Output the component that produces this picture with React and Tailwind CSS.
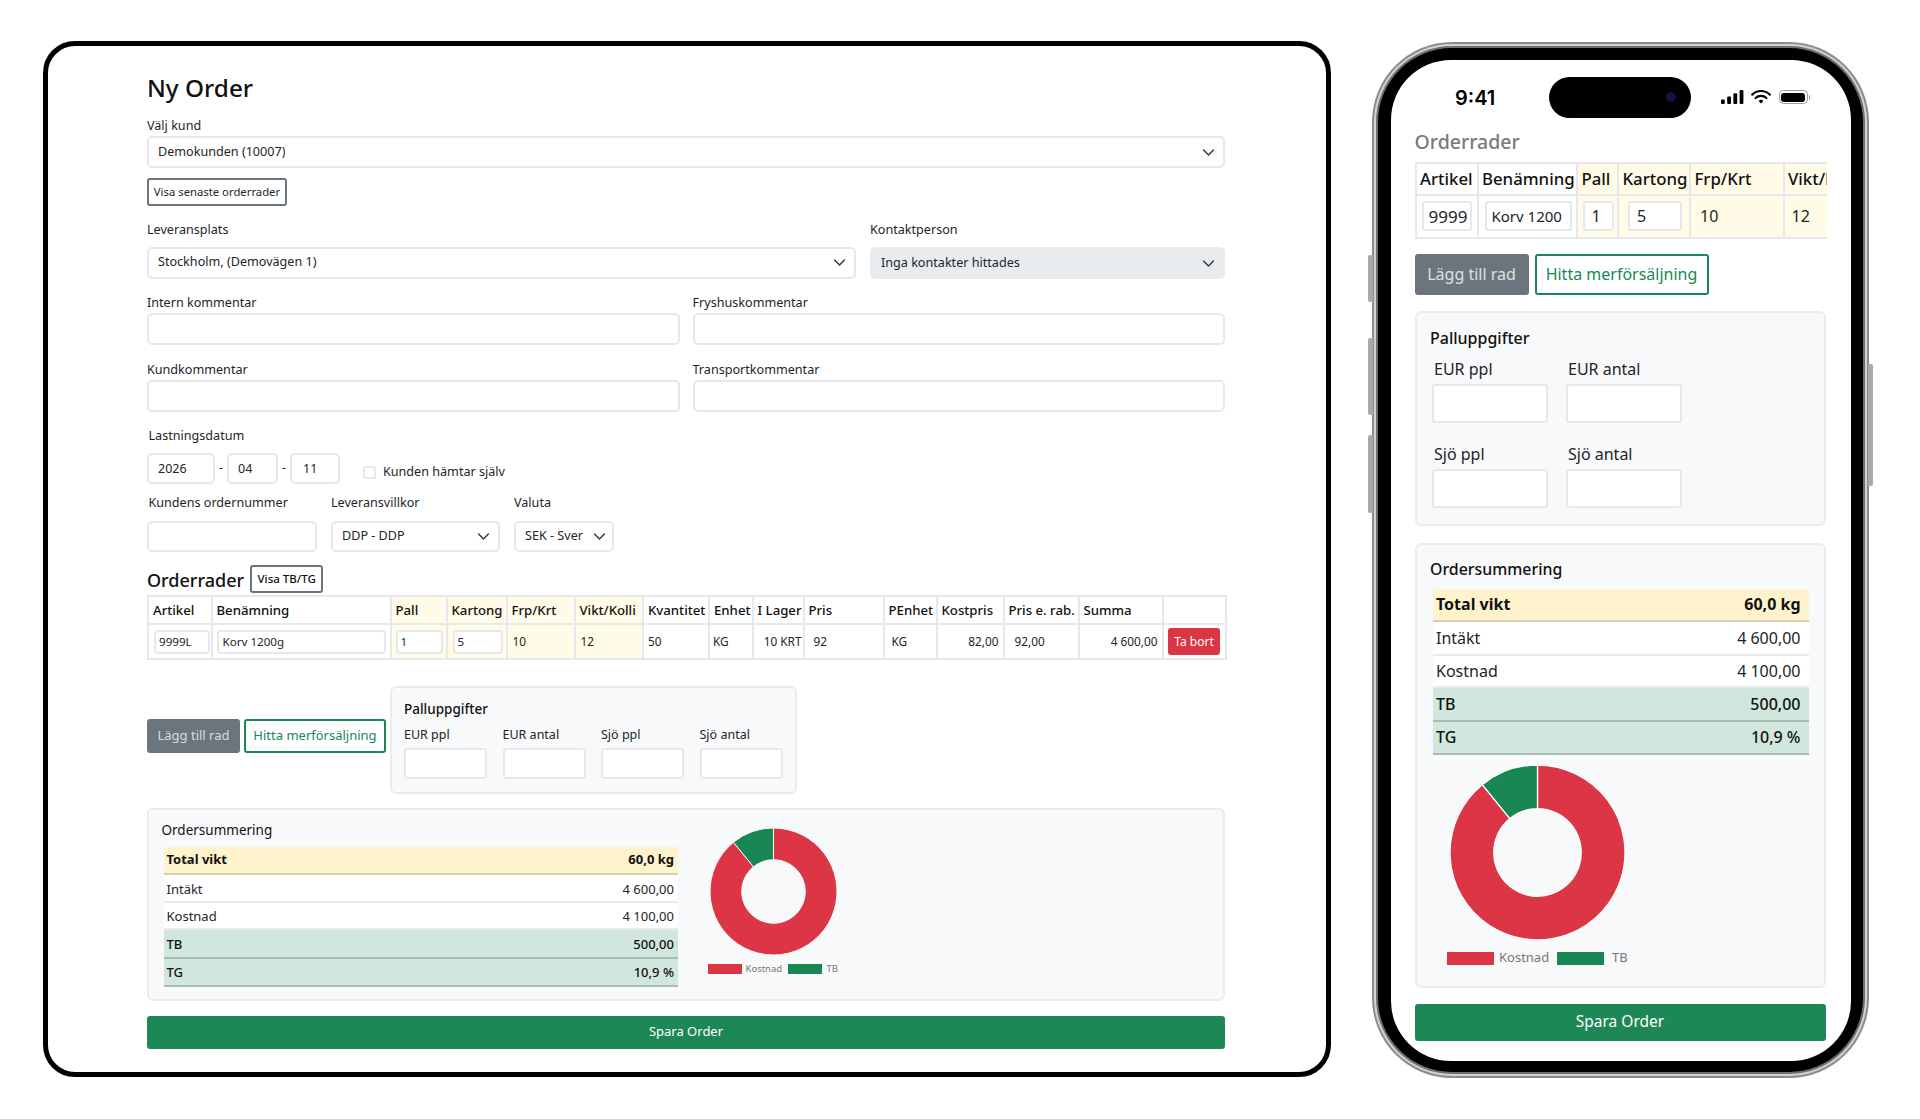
const inputBase = 'block bg-white border-2 border-[#e6e8ec] outline-none text-[#212529]';
const labelText = 'h-4 leading-[18px] text-[12.6px] whitespace-nowrap';

function Chevron({ className }) {
  return (
    <svg viewBox="0 0 16 16" fill="none" className={className}>
      <path d="m2 5 6 6 6-6" stroke="#343a40" strokeWidth="1.8" strokeLinecap="round" strokeLinejoin="round" />
    </svg>
  );
}

function Select({ value, className }) {
  return (
    <div className={`flex items-center justify-between border-2 border-[#e6e8ec] rounded-[5px] text-[12.6px] pl-[9px] pr-[8px] ${className}`}>
      <span className="whitespace-nowrap overflow-hidden">{value}</span>
      <Chevron className="w-[13px] h-[13px] shrink-0 ml-1" />
    </div>
  );
}

function Field({ label, className }) {
  return (
    <div className={className}>
      <div className={labelText}>{label}</div>
      <input readOnly className={`${inputBase} mt-[3px] w-full h-[32px] rounded-[5px]`} />
    </div>
  );
}

// share of TB in the donut: 500 of 4 600
function Donut({ className }) {
  return (
    <svg viewBox="0 0 200 200" className={className}>
      <path d="M100 0A100 100 0 1 1 36.89 22.43L68.44 61.22A50 50 0 1 0 100 50Z" fill="#dc3545" stroke="#fff" strokeWidth="1.5" />
      <path d="M36.89 22.43A100 100 0 0 1 100 0L100 50A50 50 0 0 0 68.44 61.22Z" fill="#198754" stroke="#fff" strokeWidth="1.5" />
    </svg>
  );
}

const desktopCols = [
  { label: 'Artikel', col: 'w-[63.5px]' },
  { label: 'Benämning', col: 'w-[179px]' },
  { label: 'Pall', col: 'w-[56px]', yellow: true },
  { label: 'Kartong', col: 'w-[60px]', yellow: true },
  { label: 'Frp/Krt', col: 'w-[68px]', yellow: true },
  { label: 'Vikt/Kolli', col: 'w-[68.5px]', yellow: true },
  { label: 'Kvantitet', col: 'w-[66px]' },
  { label: 'Enhet', col: 'w-[43.5px]' },
  { label: 'I Lager', col: 'w-[51px]' },
  { label: 'Pris', col: 'w-[80px]' },
  { label: 'PEnhet', col: 'w-[53px]' },
  { label: 'Kostpris', col: 'w-[67px]' },
  { label: 'Pris e. rab.', col: 'w-[75px]' },
  { label: 'Summa', col: 'w-[84px]' },
  { label: '', col: 'w-[63.5px]' },
];

const tdDesk = 'border-2 border-[#e6e8ec] text-[11.8px] p-0 whitespace-nowrap';
const cellInput = `${inputBase} h-[24px] rounded-[4px] text-[11.6px]`;

function DesktopTable() {
  return (
    <table className="mt-[2px] w-[1078px] table-fixed border-collapse">
      <colgroup>
        {desktopCols.map((c) => (
          <col key={c.label} className={c.col} />
        ))}
      </colgroup>
      <thead>
        <tr className="h-[28px]">
          {desktopCols.map((c) => (
            <th
              key={c.label}
              className={`border-2 border-[#e6e8ec] px-1 pt-[1px] text-left text-[13.2px] font-medium whitespace-nowrap text-[#111] ${c.yellow ? 'bg-[#fffbe6]' : ''}`}
            >
              {c.label}
            </th>
          ))}
        </tr>
      </thead>
      <tbody>
        <tr className="h-[35px]">
          <td className={tdDesk}>
            <input readOnly value="9999L" className={`${cellInput} w-[56px] ml-[5px] pl-[3px]`} />
          </td>
          <td className={tdDesk}>
            <input readOnly value="Korv 1200g" className={`${cellInput} w-[169px] ml-[4px] pl-[4px]`} />
          </td>
          <td className={`${tdDesk} bg-[#fffbe6]`}>
            <input readOnly value="1" className={`${cellInput} w-[47px] ml-[4px] pl-[3px]`} />
          </td>
          <td className={`${tdDesk} bg-[#fffbe6]`}>
            <input readOnly value="5" className={`${cellInput} w-[50px] ml-[5px] pl-[3px]`} />
          </td>
          <td className={`${tdDesk} bg-[#fffbe6] pl-[5px]`}>10</td>
          <td className={`${tdDesk} bg-[#fffbe6] pl-[5px]`}>12</td>
          <td className={`${tdDesk} pl-[4px]`}>50</td>
          <td className={`${tdDesk} pl-[3px]`}>KG</td>
          <td className={`${tdDesk} pr-[1px] text-right`}>10 KRT</td>
          <td className={`${tdDesk} pl-[9px]`}>92</td>
          <td className={`${tdDesk} pl-[7px]`}>KG</td>
          <td className={`${tdDesk} pr-[4px] text-right`}>82,00</td>
          <td className={`${tdDesk} pl-[10px]`}>92,00</td>
          <td className={`${tdDesk} pr-[4px] text-right`}>4 600,00</td>
          <td className={tdDesk}>
            <button className="block ml-[4.5px] w-[52px] h-[27px] rounded-[3px] bg-[#dc3545] text-white text-[12px]">Ta bort</button>
          </td>
        </tr>
      </tbody>
    </table>
  );
}

const deskRow = 'flex items-center justify-between pl-[3px] pr-[3.5px] text-[13px] border-b-2';

function Laptop() {
  return (
    <div className="w-[1288px] h-[1036px] shrink-0 border-[5px] border-black rounded-[32px] bg-white pl-[99px] pt-[26px] text-[#212529]">
      <div className="w-[1078px]">
        <h1 className="h-8 leading-8 text-[24.3px] font-medium text-[#111]">Ny Order</h1>

        <div className={`mt-[13px] ${labelText}`}>Välj kund</div>
        <Select value="Demokunden (10007)" className="mt-[3px] h-[32px]" />
        <button className="block mt-[10px] w-[140px] h-[28px] border-2 border-[#6c757d] rounded-[3px] text-[11.3px] text-[#212529] whitespace-nowrap">
          Visa senaste orderrader
        </button>

        <div className="mt-[15px] flex gap-[14.5px]">
          <div className="w-[708.5px]">
            <div className={labelText}>Leveransplats</div>
            <Select value="Stockholm, (Demovägen 1)" className="mt-[10px] h-[32px] pb-[2px]" />
          </div>
          <div className="w-[355px]">
            <div className={labelText}>Kontaktperson</div>
            <Select value="Inga kontakter hittades" className="mt-[10px] h-[32px] pt-[1px] bg-[#e9ecef] border-[#e9ecef]" />
          </div>
        </div>

        <div className="mt-[15px] flex gap-[13px]">
          <Field label="Intern kommentar" className="w-[532.5px]" />
          <Field label="Fryshuskommentar" className="w-[532.5px]" />
        </div>
        <div className="mt-[16px] flex gap-[13px]">
          <Field label="Kundkommentar" className="w-[532.5px]" />
          <Field label="Transportkommentar" className="w-[532.5px]" />
        </div>

        <div className={`mt-[15px] ml-[1.5px] ${labelText}`}>Lastningsdatum</div>
        <div className="mt-[10px] flex items-center text-[12.5px]">
          <input readOnly value="2026" className={`${inputBase} w-[68px] h-[31px] rounded-[5px] pl-[9px]`} />
          <span className="w-[12px] text-center">-</span>
          <input readOnly value="04" className={`${inputBase} w-[51px] h-[31px] rounded-[5px] pl-[9px]`} />
          <span className="w-[12px] text-center">-</span>
          <input readOnly value="11" className={`${inputBase} w-[50px] h-[31px] rounded-[5px] pl-[11px]`} />
          <label className="ml-[23px] mt-[8px] flex items-center text-[12.6px]">
            <input type="checkbox" readOnly className="appearance-none w-[12.5px] h-[12.5px] border-2 border-[#e6e8ec] rounded-[2px]" />
            <span className="ml-[7.5px]">Kunden hämtar själv</span>
          </label>
        </div>

        <div className="mt-[10px] flex">
          <div className="w-[170px]">
            <div className={`ml-[1.5px] ${labelText}`}>Kundens ordernummer</div>
            <input readOnly className={`${inputBase} mt-[11px] w-full h-[31px] rounded-[5px]`} />
          </div>
          <div className="w-[169px] ml-[14px]">
            <div className={labelText}>Leveransvillkor</div>
            <Select value="DDP - DDP" className="mt-[11px] h-[31px]" />
          </div>
          <div className="w-[100px] ml-[14px]">
            <div className={labelText}>Valuta</div>
            <Select value="SEK - Sver" className="mt-[11px] h-[31px] !pl-[9px] !pr-[6px]" />
          </div>
        </div>

        <div className="mt-[13px] h-[28px] flex items-center">
          <h2 className="text-[18px] leading-[28px] pt-[1px] font-medium text-[#111]">Orderrader</h2>
          <button className="ml-[6px] w-[73px] h-[28px] border-2 border-[#6c757d] rounded-[3px] text-[11.5px] font-medium text-[#111]">Visa TB/TG</button>
        </div>

        <DesktopTable />

        <div className="mt-[26px] flex items-start">
          <button className="mt-[33px] w-[93px] h-[34px] rounded-[3px] bg-[#6c757d] text-[#d9dcdf] text-[13px]">Lägg till rad</button>
          <button className="mt-[33px] ml-[4px] w-[142px] h-[34px] rounded-[3px] border-2 border-[#198754] text-[#198754] text-[13px] whitespace-nowrap">
            Hitta merförsäljning
          </button>
          <div className="ml-[4px] w-[407px] h-[108px] border-2 border-[#e9ecef] rounded-[6px] bg-[#f8f9fa] pl-[12px] pt-[13px]">
            <div className="h-4 leading-4 text-[13.5px] font-medium text-[#111]">Palluppgifter</div>
            <div className="mt-[10px] flex gap-[15.5px]">
              {['EUR ppl', 'EUR antal', 'Sjö ppl', 'Sjö antal'].map((l) => (
                <div key={l} className="w-[83px]">
                  <div className="h-4 leading-4 text-[12.5px] whitespace-nowrap">{l}</div>
                  <input readOnly className={`${inputBase} mt-[5px] w-full h-[31px] rounded-[3px]`} />
                </div>
              ))}
            </div>
          </div>
        </div>

        <div className="mt-[14px] h-[193px] border-2 border-[#e9ecef] rounded-[6px] bg-[#f8f9fa] pl-[12.5px] pt-[12px] flex items-start">
          <div className="w-[516px]">
            <div className="h-4 leading-4 text-[13.5px] text-[#111]">Ordersummering</div>
            <div className="mt-[9px] ml-[2px] w-[514px]">
              <div className={`${deskRow} h-[28px] bg-[#fff3cd] border-[#d8cfae] font-bold text-[#111]`}>
                <span>Total vikt</span>
                <span>60,0 kg</span>
              </div>
              <div className={`${deskRow} h-[28px] pt-[3px] bg-white border-[#e9ecef]`}>
                <span>Intäkt</span>
                <span>4 600,00</span>
              </div>
              <div className={`${deskRow} h-[27px] pt-[2px] bg-white border-[#e9ecef]`}>
                <span>Kostnad</span>
                <span>4 100,00</span>
              </div>
              <div className={`${deskRow} h-[29px] pt-[3px] bg-[#d1e7dd] border-[#a9bcb3] font-medium text-[#111]`}>
                <span>TB</span>
                <span>500,00</span>
              </div>
              <div className={`${deskRow} h-[28px] pt-[2px] bg-[#d1e7dd] border-[#a9bcb3] font-medium text-[#111]`}>
                <span>TG</span>
                <span>10,9 %</span>
              </div>
            </div>
          </div>
          <div className="ml-[30px] mt-[6px] w-[132px]">
            <Donut className="block ml-[2.5px] w-[127px] h-[127px]" />
            <div className="mt-[9px] flex items-center h-[10px] text-[9.5px] text-[#777]">
              <span className="w-[34px] h-[10px] bg-[#dc3545]" />
              <span className="ml-[4px] w-[38px]">Kostnad</span>
              <span className="ml-[4px] w-[34px] h-[10px] bg-[#198754]" />
              <span className="ml-[5px]">TB</span>
            </div>
          </div>
        </div>

        <button className="block mt-[15px] w-full h-[33px] pb-[2px] rounded-[3px] bg-[#1e8756] text-white text-[13px]">Spara Order</button>
      </div>
    </div>
  );
}

const phoneCols = [
  { label: 'Artikel', col: 'w-[62px]' },
  { label: 'Benämning', col: 'w-[99.5px]' },
  { label: 'Pall', col: 'w-[41px]', yellow: true },
  { label: 'Kartong', col: 'w-[72px]', yellow: true },
  { label: 'Frp/Krt', col: 'w-[93.5px]', yellow: true },
  { label: 'Vikt/Kolli', col: 'w-[90px]', yellow: true },
];

const tdPhone = 'border-2 border-[#e6e8ec] text-[16px] p-0 whitespace-nowrap';
const phoneInput = `${inputBase} h-[30px] rounded-[3px] text-[16px]`;
const phoneRow = 'flex items-center justify-between pl-[3px] pr-[8.5px] text-[16px] border-b-2';

function PhoneTable() {
  return (
    <div className="mt-[8px] w-[412px] overflow-hidden">
      <table className="w-[458px] table-fixed border-collapse">
        <colgroup>
          {phoneCols.map((c) => (
            <col key={c.label} className={c.col} />
          ))}
        </colgroup>
        <thead>
          <tr className="h-[32px]">
            {phoneCols.map((c) => (
              <th
                key={c.label}
                className={`border-2 border-[#e6e8ec] pl-[3.5px] text-left text-[16.8px] font-medium whitespace-nowrap text-[#111] ${c.yellow ? 'bg-[#fffbe6]' : ''}`}
              >
                {c.label}
              </th>
            ))}
          </tr>
        </thead>
        <tbody>
          <tr className="h-[43px]">
            <td className={tdPhone}>
              <input readOnly value="9999" className={`${phoneInput} w-[50px] ml-[5px] pl-[5px] text-[17px]`} />
            </td>
            <td className={tdPhone}>
              <input readOnly value="Korv 1200" className={`${phoneInput} w-[87px] ml-[6px] pl-[5px] !text-[15px]`} />
            </td>
            <td className={`${tdPhone} bg-[#fffbe6]`}>
              <input readOnly value="1" className={`${phoneInput} w-[31px] ml-[4.5px] pl-[7px]`} />
            </td>
            <td className={`${tdPhone} bg-[#fffbe6]`}>
              <input readOnly value="5" className={`${phoneInput} w-[54px] ml-[9px] pl-[7px]`} />
            </td>
            <td className={`${tdPhone} bg-[#fffbe6] pl-[9px]`}>10</td>
            <td className={`${tdPhone} bg-[#fffbe6] pl-[7px]`}>12</td>
          </tr>
        </tbody>
      </table>
    </div>
  );
}

function PhoneField({ label }) {
  return (
    <div className="w-[116px]">
      <div className="ml-[2px] h-5 leading-5 text-[16px] whitespace-nowrap">{label}</div>
      <input readOnly className={`${inputBase} mt-[5px] w-full h-[39px] rounded-[3px]`} />
    </div>
  );
}

function StatusIcons() {
  return (
    <div className="ml-[29.5px] flex items-center">
      <svg viewBox="0 0 23 14" className="w-[23px] h-[14px]" fill="#000">
        <rect x="0" y="9.5" width="3.8" height="4.5" rx="1" />
        <rect x="6.2" y="6.5" width="3.8" height="7.5" rx="1" />
        <rect x="12.4" y="3.2" width="3.8" height="10.8" rx="1" />
        <rect x="18.6" y="0" width="3.8" height="14" rx="1" />
      </svg>
      <svg viewBox="0 0 20 14" className="ml-[7px] w-[20px] h-[14px]" fill="none" stroke="#000" strokeLinecap="round">
        <path d="M1.2 4.6a12.6 12.6 0 0 1 17.6 0" strokeWidth="2.2" />
        <path d="M4.6 8a7.8 7.8 0 0 1 10.8 0" strokeWidth="2.2" />
        <path d="M10 13.6 7.6 11a3.4 3.4 0 0 1 4.8 0Z" fill="#000" stroke="none" />
      </svg>
      <div className="ml-[8px] flex items-center">
        <div className="w-[29px] h-[14px] rounded-[4.5px] border border-[#9a9a9a] p-[1.5px]">
          <div className="w-full h-full rounded-[3px] bg-black" />
        </div>
        <span className="ml-[1px] w-[1.5px] h-[5px] rounded-r-full bg-[#9a9a9a]" />
      </div>
    </div>
  );
}

function Phone() {
  return (
    <div className="relative ml-[41px] mt-[1px] w-[497px] h-[1036px] shrink-0">
      <span className="absolute left-[-4px] top-[213px] w-[5px] h-[47px] rounded-l-[2px] bg-[#a9a9a9]" />
      <span className="absolute left-[-4px] top-[296px] w-[5px] h-[77px] rounded-l-[2px] bg-[#a9a9a9]" />
      <span className="absolute left-[-4px] top-[393px] w-[5px] h-[78px] rounded-l-[2px] bg-[#a9a9a9]" />
      <span className="absolute right-[-4px] top-[322px] w-[5px] h-[122px] rounded-r-[2px] bg-[#a9a9a9]" />
      <div className="w-full h-full rounded-[80px] bg-[#8c8c8c] p-[2px]">
        <div className="w-full h-full rounded-[78px] bg-[#d2d2d2] p-[2px]">
          <div className="w-full h-full rounded-[76px] bg-[#6e6e6e] p-[2px]">
            <div className="w-full h-full rounded-[74px] bg-black px-[12.5px] pt-[11.5px] pb-[12.5px]">
              <div className="w-[460px] h-[1001px] rounded-[60px] bg-white overflow-hidden pt-[17px] text-[#212529]">
                <div className="flex items-center h-[41px] pl-[64.5px]">
                  <span className="w-[94px] pt-[1px] text-[20px] font-semibold font-['Inter'] text-black">9:41</span>
                  <div className="relative w-[142px] h-[41px] rounded-full bg-black">
                    <span className="absolute right-[15px] top-[15.5px] w-[10px] h-[10px] rounded-full bg-[#14123a]" />
                  </div>
                  <StatusIcons />
                </div>

                <div className="pl-[24px]">
                  <h2 className="mt-[12px] h-6 leading-6 text-[19.5px] font-medium text-[#7a7a7a]">Orderrader</h2>
                  <PhoneTable />

                  <div className="mt-[15px] flex">
                    <button className="w-[114px] h-[41px] rounded-[3px] bg-[#6c757d] text-[#dfe1e4] text-[16px] whitespace-nowrap">Lägg till rad</button>
                    <button className="ml-[6px] w-[174px] h-[41px] rounded-[3px] border-2 border-[#198754] text-[#198754] text-[16px] whitespace-nowrap">
                      Hitta merförsäljning
                    </button>
                  </div>

                  <div className="mt-[16px] w-[411px] h-[215px] border-2 border-[#e9ecef] rounded-[6px] bg-[#f8f9fa] pl-[13.5px] pt-[14px]">
                    <div className="h-[22px] leading-[22px] text-[16px] font-medium text-[#111]">Palluppgifter</div>
                    <div className="mt-[10px] ml-[2px] grid grid-cols-[116px_116px] gap-x-[18px] gap-y-[21px]">
                      <PhoneField label="EUR ppl" />
                      <PhoneField label="EUR antal" />
                      <PhoneField label="Sjö ppl" />
                      <PhoneField label="Sjö antal" />
                    </div>
                  </div>

                  <div className="mt-[17px] w-[411px] h-[445px] border-2 border-[#e9ecef] rounded-[6px] bg-[#f8f9fa] pl-[13.5px] pt-[13px]">
                    <div className="h-[22px] leading-[22px] text-[15.9px] font-medium text-[#111]">Ordersummering</div>
                    <div className="mt-[9px] ml-[3px] w-[376px]">
                      <div className={`${phoneRow} h-[33px] bg-[#fff3cd] border-[#d8cfae] font-bold text-[#111]`}>
                        <span>Total vikt</span>
                        <span>60,0 kg</span>
                      </div>
                      <div className={`${phoneRow} h-[34px] bg-white border-[#e9ecef]`}>
                        <span>Intäkt</span>
                        <span>4 600,00</span>
                      </div>
                      <div className={`${phoneRow} h-[32px] bg-white border-[#e9ecef]`}>
                        <span>Kostnad</span>
                        <span>4 100,00</span>
                      </div>
                      <div className={`${phoneRow} h-[34px] bg-[#d1e7dd] border-[#a9bcb3] font-medium text-[#111]`}>
                        <span>TB</span>
                        <span>500,00</span>
                      </div>
                      <div className={`${phoneRow} h-[33px] bg-[#d1e7dd] border-[#a9bcb3] font-medium text-[#111]`}>
                        <span>TG</span>
                        <span>10,9 %</span>
                      </div>
                    </div>
                    <Donut className="block mt-[10px] ml-[20px] w-[175px] h-[175px]" />
                    <div className="mt-[12px] ml-[17px] flex items-center h-[13px] text-[13px] text-[#777]">
                      <span className="w-[47px] h-[13px] bg-[#dc3545]" />
                      <span className="ml-[5px] w-[50px]">Kostnad</span>
                      <span className="ml-[8px] w-[47px] h-[13px] bg-[#198754]" />
                      <span className="ml-[8px]">TB</span>
                    </div>
                  </div>

                  <button className="block mt-[16px] w-[411px] h-[37px] rounded-[3px] bg-[#1e8756] text-white text-[15.5px]">Spara Order</button>
                </div>
              </div>
            </div>
          </div>
        </div>
      </div>
    </div>
  );
}

export default function App() {
  return (
    <div className="w-[1920px] h-[1119px] bg-white flex items-start pl-[43px] pt-[41px] overflow-hidden font-['Noto_Sans',sans-serif]">
      <Laptop />
      <Phone />
    </div>
  );
}
